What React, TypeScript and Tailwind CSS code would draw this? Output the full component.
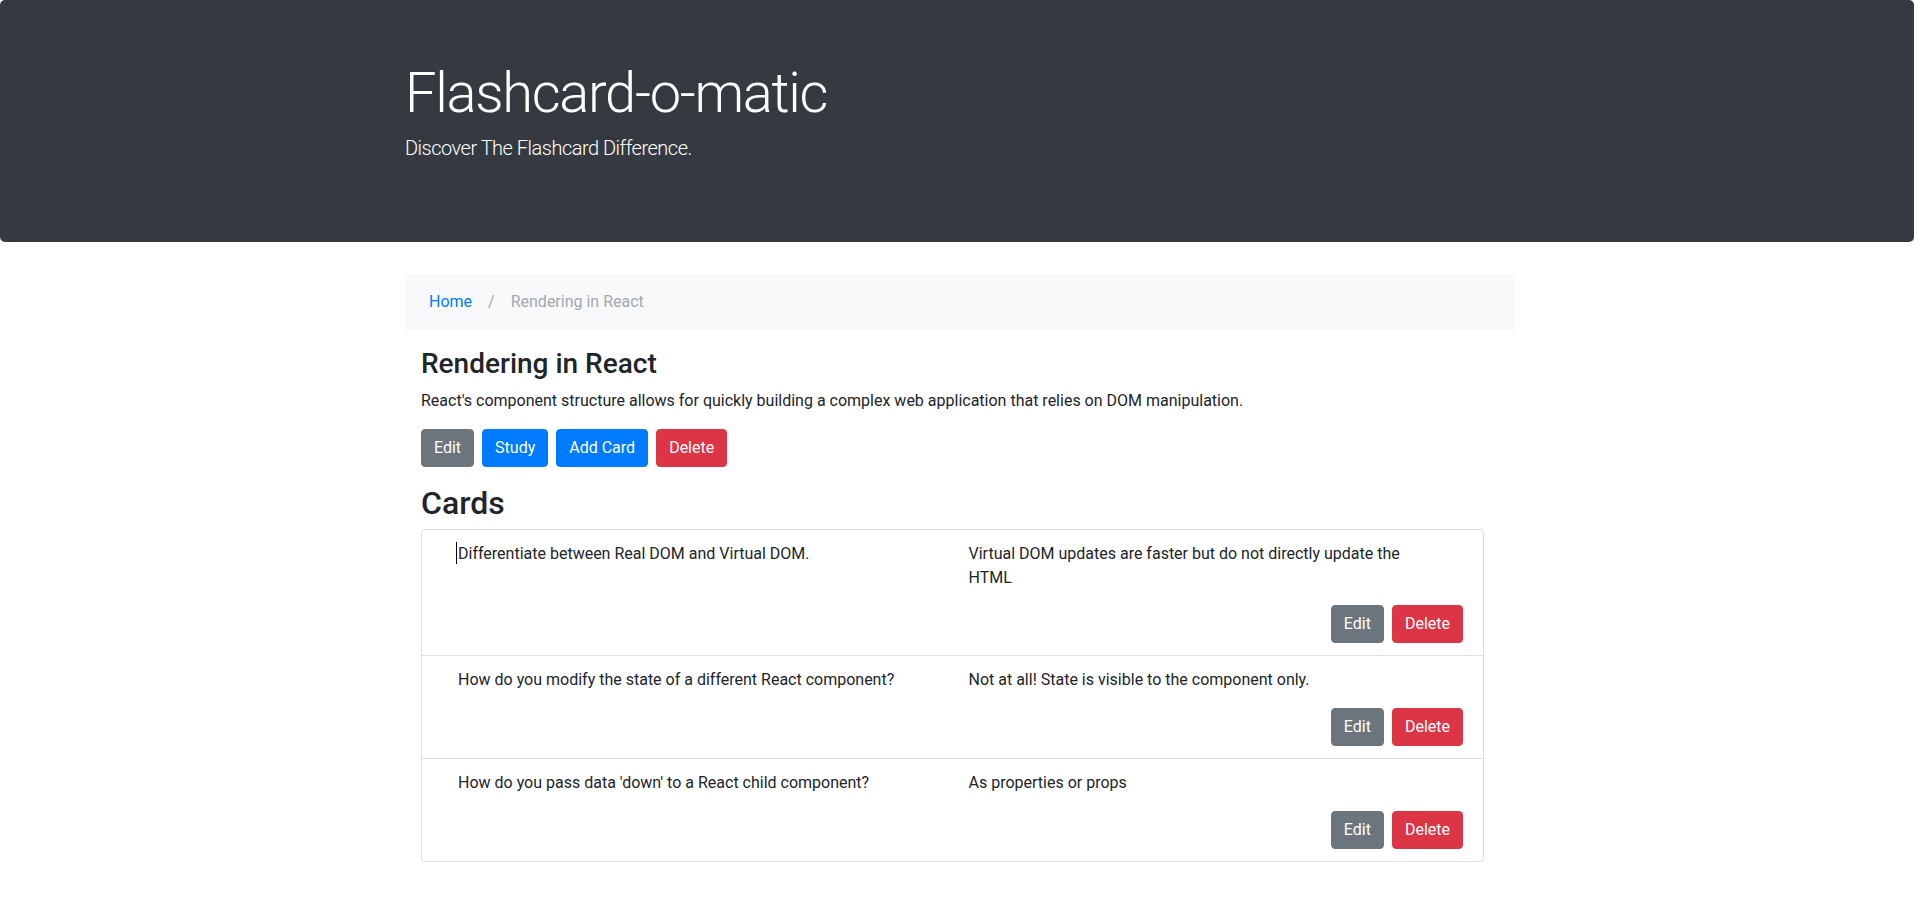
const cards = [
  {
    id: 1,
    front: "Differentiate between Real DOM and Virtual DOM.",
    back: "Virtual DOM updates are faster but do not directly update the HTML",
  },
  {
    id: 2,
    front: "How do you modify the state of a different React component?",
    back: "Not at all! State is visible to the component only.",
  },
  {
    id: 3,
    front: "How do you pass data 'down' to a React child component?",
    back: "As properties or props",
  },
];

function Btn({ children, color }: { children: React.ReactNode; color: "gray" | "blue" | "red" }) {
  const bg =
    color === "gray"
      ? "bg-[#6c757d] border-[#6c757d]"
      : color === "blue"
        ? "bg-[#007bff] border-[#007bff]"
        : "bg-[#dc3545] border-[#dc3545]";
  return (
    <button className={`${bg} border rounded-[4px] px-3 py-[6px] text-base leading-6 text-white`}>
      {children}
    </button>
  );
}

export default function App() {
  return (
    <div className="min-h-[922px] bg-white font-['Roboto',sans-serif] text-[#212529]">
      <header className="h-[242px] rounded-[5px] bg-[#343a40] pt-[60px] text-white">
        <div className="mx-auto w-[1116px] pl-[6px]">
          <h1 className="text-[56px] font-light leading-[1.2] tracking-[-1.3px]">Flashcard-o-matic</h1>
          <p className="mt-[6px] text-[20px] font-light leading-[30px] tracking-[-0.5px]">
            Discover The Flashcard Difference.
          </p>
        </div>
      </header>

      <main className="mx-auto mt-8 w-[1116px] pl-[6px]">
        <nav className="flex items-center bg-[#f8f9fa] py-4 pl-6 text-base leading-6">
          <a className="text-[#007bff]">Home</a>
          <span className="px-4 text-[#a3a8ae]">/</span>
          <span className="text-[#a3a8ae]">Rendering in React</span>
        </nav>

        <div className="pl-4 pr-[31px]">
          <h3 className="mt-[17px] text-[28px] font-medium leading-[1.2]">Rendering in React</h3>
          <p className="mt-2 text-base leading-6">
            React's component structure allows for quickly building a complex web application that relies on DOM
            manipulation.
          </p>
          <div className="mt-4 flex gap-2">
            <Btn color="gray">Edit</Btn>
            <Btn color="blue">Study</Btn>
            <Btn color="blue">Add Card</Btn>
            <Btn color="red">Delete</Btn>
          </div>

          <h2 className="mt-[17px] text-[32px] font-medium leading-[1.2]">Cards</h2>
          <ul className="mt-[7px] rounded-[4px] border border-[#dfdfdf]">
            {cards.map((card, i) => (
              <li key={card.id} className={`px-5 py-3 ${i > 0 ? "border-t border-[#dfdfdf]" : ""}`}>
                <div className="grid grid-cols-2 text-base leading-6">
                  <div className="px-4">
                    {i === 0 && <span className="-ml-[2px] mr-px inline-block h-[22px] w-px bg-black align-[-5px]" />}
                    {card.front}
                  </div>
                  <div className="px-4">{card.back}</div>
                </div>
                <div className={`flex justify-end gap-2 ${i === 0 ? "mt-[15px]" : "mt-4"}`}>
                  <Btn color="gray">Edit</Btn>
                  <Btn color="red">Delete</Btn>
                </div>
              </li>
            ))}
          </ul>
        </div>
      </main>
    </div>
  );
}
